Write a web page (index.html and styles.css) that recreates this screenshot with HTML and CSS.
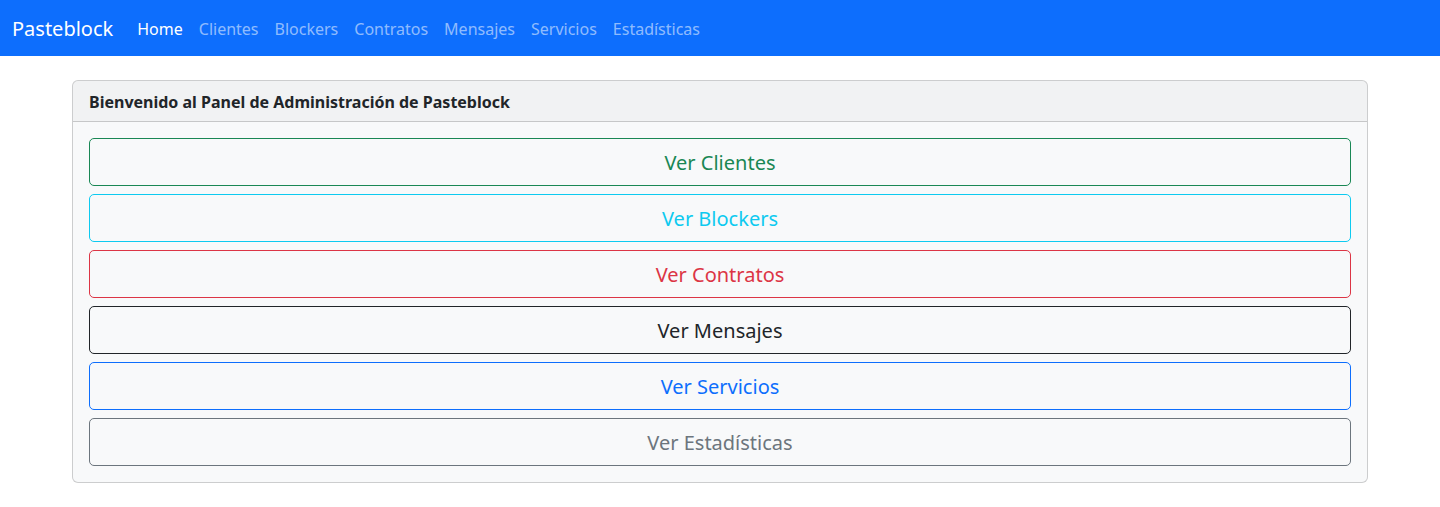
FILE: index.html
```html
<!DOCTYPE html>
<html lang="es">
<head>
<meta charset="utf-8">
<title>Pasteblock</title>
<link rel="stylesheet" href="styles.css">
</head>
<body>
<nav class="navbar">
  <a class="brand" href="#">Pasteblock</a>
  <ul class="nav">
    <li><a class="nav-link active" href="#">Home</a></li>
    <li><a class="nav-link" href="#">Clientes</a></li>
    <li><a class="nav-link" href="#">Blockers</a></li>
    <li><a class="nav-link" href="#">Contratos</a></li>
    <li><a class="nav-link" href="#">Mensajes</a></li>
    <li><a class="nav-link" href="#">Servicios</a></li>
    <li><a class="nav-link" href="#">Estadísticas</a></li>
  </ul>
</nav>
<main class="container">
  <section class="card">
    <header class="card-header">Bienvenido al Panel de Administración de Pasteblock</header>
    <div class="card-body">
      <a class="btn btn-success" href="#">Ver Clientes</a>
      <a class="btn btn-info" href="#">Ver Blockers</a>
      <a class="btn btn-danger" href="#">Ver Contratos</a>
      <a class="btn btn-dark" href="#">Ver Mensajes</a>
      <a class="btn btn-primary" href="#">Ver Servicios</a>
      <a class="btn btn-secondary" href="#">Ver Estadísticas</a>
    </div>
  </section>
</main>
</body>
</html>
```
FILE: styles.css
```css
* { box-sizing: border-box; }
html, body { margin: 0; }
body {
  font-family: "Noto Sans", "Open Sans", sans-serif;
  font-size: 16px;
  line-height: 1.5;
  color: #212529;
  background: #fff;
}
a { text-decoration: none; }
.navbar {
  height: 56px;
  background: #0d6efd;
  display: flex;
  align-items: center;
  padding: 0 12px;
}
.brand {
  color: #fff;
  font-size: 20px;
  line-height: 30px;
  margin-right: 16px;
  padding: 6px 0 4px;
}
.nav {
  list-style: none;
  margin: 0;
  padding: 0;
  display: flex;
}
.nav-link {
  display: block;
  padding: 9px 8px 7px;
  color: rgba(255,255,255,.55);
}
.nav-link.active { color: #fff; }
.container {
  max-width: 1320px;
  margin: 24px auto 0;
  padding: 0 12px;
}
.card {
  border: 1px solid rgba(0,0,0,.176);
  border-radius: 6px;
  background: #f8f9fa;
  overflow: hidden;
}
.card-header {
  padding: 9px 16px 7px;
  background: rgba(33,37,41,.03);
  border-bottom: 1px solid rgba(0,0,0,.176);
  font-weight: 700;
  line-height: 24px;
}
.card-body {
  padding: 16px;
  display: grid;
  gap: 8px;
}
.btn {
  display: block;
  text-align: center;
  font-size: 20px;
  line-height: 30px;
  padding: 9px 16px 7px;
  border: 1px solid;
  border-radius: 5px;
  background: transparent;
}
.btn-success { color: #198754; border-color: #198754; }
.btn-info { color: #0dcaf0; border-color: #0dcaf0; }
.btn-danger { color: #dc3545; border-color: #dc3545; }
.btn-dark { color: #212529; border-color: #212529; }
.btn-primary { color: #0d6efd; border-color: #0d6efd; }
.btn-secondary { color: #6c757d; border-color: #6c757d; }
```
